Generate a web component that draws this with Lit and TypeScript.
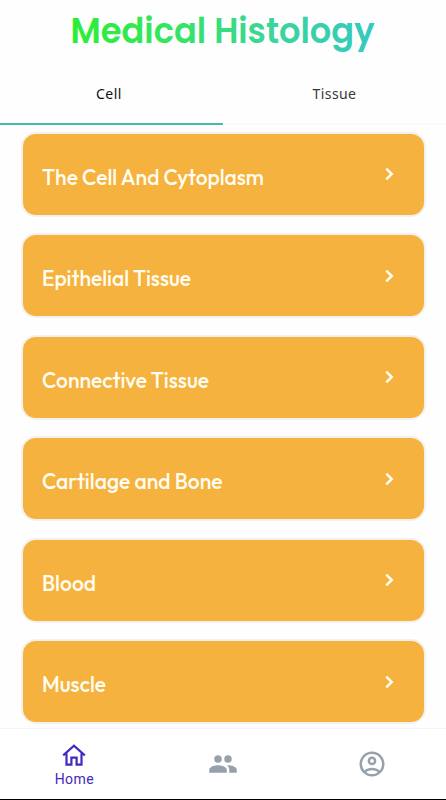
import { LitElement, html, css, svg } from "lit";
import { customElement } from "lit/decorators.js";

const chapters = [
  { label: "The Cell And Cytoplasm", width: 222 },
  { label: "Epithelial Tissue", width: 149 },
  { label: "Connective Tissue", width: 167 },
  { label: "Cartilage and Bone", width: 180.5 },
  { label: "Blood", width: 54 },
  { label: "Muscle", width: 64 },
];

const icons = {
  home: svg`<path fill="none" stroke="currentColor" stroke-width="2.2" d="M1.2 11.4L12 1.7l10.8 9.7M4.5 9.5v11.2h4.9v-7h5.2v7h4.9V9.5"/>`,
  people: svg`<path d="M16 11a3 3 0 1 0 0-6 3 3 0 0 0 0 6zM8 11a3 3 0 1 0 0-6 3 3 0 0 0 0 6zM8 13c-2.33 0-7 1.17-7 3.5V19h14v-2.5c0-2.33-4.67-3.5-7-3.5zm8 0c-.29 0-.62.02-.97.05 1.16.84 1.97 1.97 1.97 3.45V19h6v-2.5c0-2.33-4.67-3.5-7-3.5z"/>`,
  account: svg`<path fill-rule="evenodd" d="M12 2a10 10 0 1 0 0 20 10 10 0 0 0 0-20zM7.35 18.5C8.66 17.56 10.26 17 12 17s3.34.56 4.65 1.5C15.34 19.44 13.74 20 12 20s-3.34-.56-4.65-1.5zm10.79-1.38C16.45 15.8 14.32 15 12 15s-4.45.8-6.14 2.12A7.96 7.96 0 0 1 4 12a8 8 0 1 1 14.14 5.12zM12 6a3.5 3.5 0 1 0 0 7 3.5 3.5 0 0 0 0-7zm0 5a1.5 1.5 0 1 1 0-3 1.5 1.5 0 0 1 0 3z"/>`,
};

@customElement("app-root")
export class AppRoot extends LitElement {
  static styles = css`
    :host {
      display: flex;
      flex-direction: column;
      box-sizing: border-box;
      width: 446px;
      height: 800px;
      overflow: hidden;
      background: #fefefe;
      border-bottom: 1px solid #000;
      font-family: "Noto Sans", sans-serif;
    }
    svg { display: block; }
    .title { height: 64px; flex: none; margin: 0; }
    .title text { font: 600 35px Poppins, Inter, sans-serif; }
    .tabs {
      display: flex;
      flex: none;
      height: 61px;
      box-sizing: border-box;
      border-bottom: 1px solid #f9f9f9;
    }
    .tab {
      width: 223px;
      height: 61px;
      box-sizing: border-box;
      padding: 0 5px 0 0;
      display: flex;
      align-items: center;
      justify-content: center;
      font-size: 14px;
      letter-spacing: 0.5px;
      color: #37373c;
    }
    .tab.other { padding: 0 0 2px 0; letter-spacing: 0.4px; }
    .tab.active {
      color: #111;
      border-bottom: 2px solid #45b8b0;
    }
    .list {
      flex: 1;
      min-height: 0;
      overflow: hidden;
      display: flex;
      flex-direction: column;
      gap: 16.5px;
      padding: 6.5px 20.5px 0;
    }
    .card {
      flex: none;
      box-sizing: border-box;
      height: 85px;
      border: 2px solid #f4f1ec;
      border-radius: 15px;
      background: #f6b23e;
      display: flex;
      justify-content: space-between;
      padding: 0 28px 0 19.5px;
    }
    .label { margin-top: 27px; overflow: visible; }
    .label text { font: 500 21.7px Outfit, Lato, sans-serif; fill: #fffdf2; }
    .chevron { margin-top: 32.5px; }
    .nav {
      flex: none;
      height: 71px;
      box-sizing: border-box;
      border-top: 1px solid #f3f3f3;
      background: #fff;
      display: grid;
      grid-template-columns: repeat(3, 1fr);
    }
    .item {
      display: flex;
      flex-direction: column;
      align-items: center;
      padding-top: 20px;
      color: #97a1ab;
      fill: currentColor;
    }
    .item.on { color: #4329bd; padding-top: 15px; }
    .caption {
      font: 14px/18px Roboto, sans-serif;
      letter-spacing: 0.4px;
      margin-top: 4px;
    }
  `;

  render() {
    return html`
      <h1 class="title">
        <svg width="446" height="64">
          <defs>
            <linearGradient id="fade" gradientUnits="userSpaceOnUse" x1="71" y1="0" x2="374" y2="0">
              <stop offset="0" stop-color="#2bee35" />
              <stop offset="0.3" stop-color="#34e65c" />
              <stop offset="0.65" stop-color="#3cd598" />
              <stop offset="1" stop-color="#36c9c0" />
            </linearGradient>
          </defs>
          <text x="70.5" y="43" textLength="304" lengthAdjust="spacingAndGlyphs" fill="url(#fade)">Medical Histology</text>
        </svg>
      </h1>
      <div class="tabs">
        <div class="tab active">Cell</div>
        <div class="tab other">Tissue</div>
      </div>
      <div class="list">
        ${chapters.map(
          (c) => html`<div class="card">
            <svg class="label" width="230" height="34">
              <text x="0" y="24.3" textLength=${c.width} lengthAdjust="spacingAndGlyphs">${c.label}</text>
            </svg>
            <svg class="chevron" width="12" height="16" fill="none" stroke="#fffdf2" stroke-width="2.5">
              <path d="M2.3 2.6l5.4 5.4-5.4 5.4" />
            </svg>
          </div>`
        )}
      </div>
      <div class="nav">
        <div class="item on">
          <svg width="24" height="22" viewBox="0 0 24 22">${icons.home}</svg>
          <span class="caption">Home</span>
        </div>
        <div class="item"><svg width="30" height="30" viewBox="0 0 24 24">${icons.people}</svg></div>
        <div class="item"><svg width="30" height="30" viewBox="0 0 24 24">${icons.account}</svg></div>
      </div>
    `;
  }
}
